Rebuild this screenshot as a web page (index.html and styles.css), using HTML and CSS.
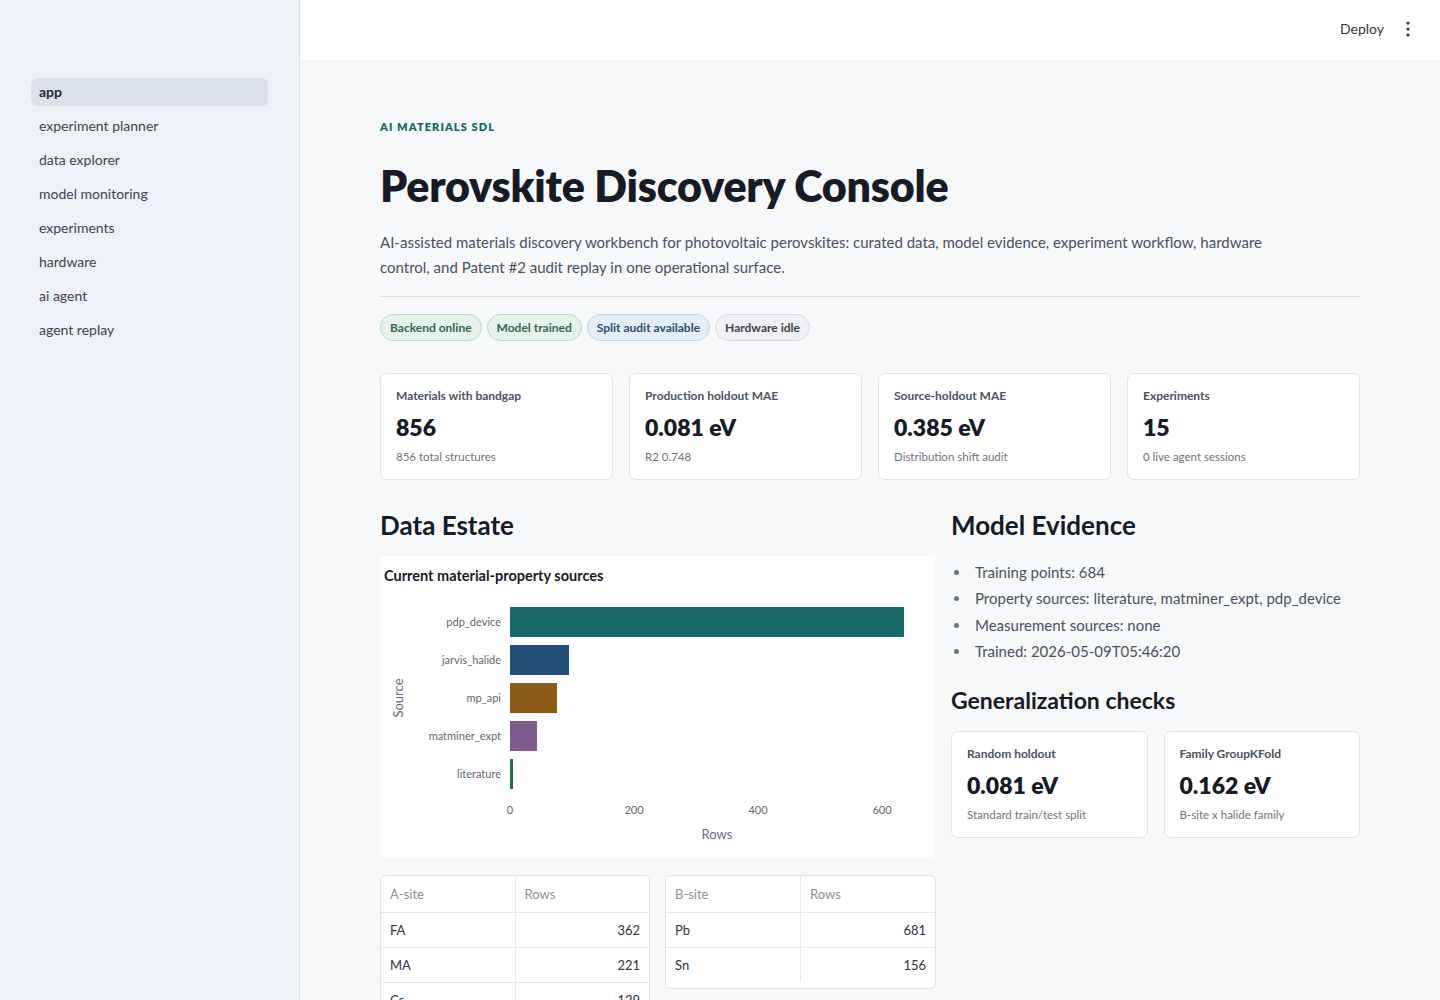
FILE: index.html
```html
<!DOCTYPE html>
<html lang="en">
<head>
<meta charset="utf-8">
<title>Perovskite Discovery Console</title>
<link rel="stylesheet" href="styles.css">
</head>
<body>
<div class="app">
  <aside class="sidebar">
    <nav class="nav">
      <a class="nav-item active">app</a>
      <a class="nav-item">experiment planner</a>
      <a class="nav-item">data explorer</a>
      <a class="nav-item">model monitoring</a>
      <a class="nav-item">experiments</a>
      <a class="nav-item">hardware</a>
      <a class="nav-item">ai agent</a>
      <a class="nav-item">agent replay</a>
    </nav>
  </aside>
  <div class="main">
    <header class="topbar">
      <span class="deploy">Deploy</span>
      <svg class="kebab" width="4" height="16" viewBox="0 0 4 16"><circle cx="2" cy="2" r="1.6" fill="#31333f"/><circle cx="2" cy="8" r="1.6" fill="#31333f"/><circle cx="2" cy="14" r="1.6" fill="#31333f"/></svg>
    </header>
    <main class="content">
      <div class="eyebrow">AI MATERIALS SDL</div>
      <h1 class="title">Perovskite Discovery Console</h1>
      <p class="lede">AI-assisted materials discovery workbench for photovoltaic perovskites: curated data, model evidence, experiment workflow, hardware control, and Patent #2 audit replay in one operational surface.</p>
      <hr class="divider">
      <div class="pills">
        <span class="pill green">Backend online</span>
        <span class="pill green">Model trained</span>
        <span class="pill blue">Split audit available</span>
        <span class="pill gray">Hardware idle</span>
      </div>
      <div class="metrics">
        <div class="card">
          <div class="card-label">Materials with bandgap</div>
          <div class="card-value">856</div>
          <div class="card-note">856 total structures</div>
        </div>
        <div class="card">
          <div class="card-label">Production holdout MAE</div>
          <div class="card-value">0.081 eV</div>
          <div class="card-note">R2 0.748</div>
        </div>
        <div class="card">
          <div class="card-label">Source-holdout MAE</div>
          <div class="card-value">0.385 eV</div>
          <div class="card-note">Distribution shift audit</div>
        </div>
        <div class="card">
          <div class="card-label">Experiments</div>
          <div class="card-value">15</div>
          <div class="card-note">0 live agent sessions</div>
        </div>
      </div>
      <div class="columns">
        <section class="col-left">
          <h2 class="section-title">Data Estate</h2>
          <div class="chart">
            <div class="chart-title">Current material-property sources</div>
            <svg class="chart-svg" width="555" height="270" viewBox="0 0 555 270">
              <g class="ylabels" text-anchor="end">
                <text x="121" y="39">pdp_device</text>
                <text x="121" y="77">jarvis_halide</text>
                <text x="121" y="115">mp_api</text>
                <text x="121" y="153">matminer_expt</text>
                <text x="121" y="191">literature</text>
              </g>
              <rect x="130" y="20" width="394" height="30" fill="#17696a"/>
              <rect x="130" y="58" width="59" height="30" fill="#244f78"/>
              <rect x="130" y="96" width="47" height="30" fill="#8a5a17"/>
              <rect x="130" y="134" width="27" height="30" fill="#7b5c8d"/>
              <rect x="130" y="172" width="3" height="30" fill="#2b6b4c"/>
              <g class="xlabels" text-anchor="middle">
                <text x="130" y="227">0</text>
                <text x="254" y="227">200</text>
                <text x="378" y="227">400</text>
                <text x="502" y="227">600</text>
              </g>
              <text class="axis-title" x="337" y="252" text-anchor="middle">Rows</text>
              <text class="axis-title" x="0" y="0" text-anchor="middle" transform="translate(23 111) rotate(-90)">Source</text>
            </svg>
          </div>
          <div class="tables">
            <div class="table-wrap">
              <table class="dtable">
                <thead><tr><th>A-site</th><th>Rows</th></tr></thead>
                <tbody>
                  <tr><td>FA</td><td class="num">362</td></tr>
                  <tr><td>MA</td><td class="num">221</td></tr>
                  <tr><td>Cs</td><td class="num">129</td></tr>
                </tbody>
              </table>
            </div>
            <div class="table-wrap">
              <table class="dtable">
                <thead><tr><th>B-site</th><th>Rows</th></tr></thead>
                <tbody>
                  <tr><td>Pb</td><td class="num">681</td></tr>
                  <tr><td>Sn</td><td class="num">156</td></tr>
                </tbody>
              </table>
            </div>
          </div>
        </section>
        <section class="col-right">
          <h2 class="section-title">Model Evidence</h2>
          <ul class="evidence">
            <li>Training points: 684</li>
            <li>Property sources: literature, matminer_expt, pdp_device</li>
            <li>Measurement sources: none</li>
            <li>Trained: 2026-05-09T05:46:20</li>
          </ul>
          <h3 class="sub-title">Generalization checks</h3>
          <div class="checks">
            <div class="card">
              <div class="card-label">Random holdout</div>
              <div class="card-value">0.081 eV</div>
              <div class="card-note">Standard train/test split</div>
            </div>
            <div class="card">
              <div class="card-label">Family GroupKFold</div>
              <div class="card-value">0.162 eV</div>
              <div class="card-note">B-site x halide family</div>
            </div>
          </div>
        </section>
      </div>
    </main>
  </div>
</div>
</body>
</html>
```
FILE: styles.css
```css
* { box-sizing: border-box; }
html, body { margin: 0; padding: 0; }
body {
  font-family: "Lato", "Noto Sans", "Liberation Sans", sans-serif;
  color: #31333f;
  background: #f6f8fa;
}
.app {
  display: flex;
  min-height: 100vh;
}
.sidebar {
  width: 300px;
  flex: 0 0 300px;
  background: #eef2f6;
  border-right: 1px solid #dde2e8;
  min-height: 100vh;
  padding: 78px 31px 0 31px;
}
.nav { display: flex; flex-direction: column; gap: 6px; }
.nav-item {
  display: block;
  height: 28px;
  line-height: 27px;
  padding: 0 8px;
  border-radius: 6px;
  font-size: 14px;
  color: #3d4350;
}
.nav-item.active {
  background: #dbe1e9;
  font-weight: 700;
  color: #262a33;
}
.main { flex: 1; display: flex; flex-direction: column; min-width: 0; }
.topbar {
  height: 60px;
  background: #ffffff;
  display: flex;
  align-items: center;
  justify-content: flex-end;
  padding-right: 30px;
  padding-bottom: 3px;
  gap: 22px;
}
.deploy { font-size: 14px; color: #31333f; }
.kebab { display: block; }
.content {
  padding: 60px 80px 40px 80px;
}
.eyebrow {
  font-size: 11px;
  font-weight: 800;
  letter-spacing: 1.1px;
  color: #0f6b66;
  line-height: 14px;
}
.title {
  margin: 26px 0 0 0;
  font-size: 43px;
  line-height: 52px;
  font-weight: 800;
  color: #161b26;
  letter-spacing: -0.2px;
}
.lede {
  margin: 18px 0 0 0;
  max-width: 900px;
  font-size: 15px;
  line-height: 25px;
  color: #4a5160;
}
.divider {
  margin: 16px 0 0 0;
  border: 0;
  border-top: 1px solid #d9dee5;
}
.pills { display: flex; gap: 5px; margin-top: 17px; }
.pill {
  display: inline-block;
  height: 27px;
  line-height: 25px;
  padding: 0 9px;
  border-radius: 14px;
  font-size: 12px;
  font-weight: 700;
  border: 1px solid;
}
.pill.green { background: #e6f2ea; border-color: #bcd9c6; color: #2b6b4a; }
.pill.blue { background: #e5edf7; border-color: #c3d3e7; color: #234e78; }
.pill.gray { background: #eef0f3; border-color: #d3d8df; color: #3b4250; }
.metrics {
  display: grid;
  grid-template-columns: repeat(4, 1fr);
  gap: 16px;
  margin-top: 32px;
}
.card {
  background: #ffffff;
  border: 1px solid #dfe3e8;
  border-radius: 7px;
  padding: 14px 15px 14px 15px;
  height: 107px;
}
.card-label { font-size: 12px; font-weight: 700; color: #4b5260; line-height: 16px; }
.card-value { font-size: 23px; font-weight: 800; color: #161b26; line-height: 30px; margin-top: 8px; }
.card-note { font-size: 11.5px; color: #6c7381; line-height: 16px; margin-top: 7px; }
.columns {
  display: grid;
  grid-template-columns: 555px 1fr;
  gap: 16px;
  margin-top: 30px;
}
.section-title {
  margin: 0;
  font-size: 26px;
  line-height: 30px;
  font-weight: 700;
  color: #161b26;
}
.chart {
  margin-top: 17px;
  background: #ffffff;
  height: 300px;
}
.chart-title {
  font-size: 14.5px;
  font-weight: 700;
  color: #161b26;
  padding: 10px 0 0 4px;
  line-height: 18px;
}
.chart-svg { display: block; margin-top: 2px; }
.chart-svg text { font-family: "Lato", "Noto Sans", sans-serif; fill: #5f6573; font-size: 11px; }
.chart-svg .axis-title { font-size: 13px; fill: #666c79; }
.tables {
  display: grid;
  grid-template-columns: 270px 271px;
  gap: 15px;
  margin-top: 18px;
}
.table-wrap {
  background: #ffffff;
  border: 1px solid #dfe3e8;
  border-radius: 6px;
  overflow: hidden;
  align-self: start;
  padding: 0 0 6px 0;
}
.dtable { width: 100%; border-collapse: collapse; font-size: 13px; }
.dtable th, .dtable td {
  height: 35px;
  padding: 0 9px;
  border-bottom: 1px solid #e6e9ee;
  text-align: left;
  width: 50%;
}
.dtable th + th, .dtable td + td { border-left: 1px solid #e6e9ee; }
.dtable th { font-weight: 400; color: #8a8f9b; height: 36px; }
.dtable td { color: #31333f; }
.dtable td.num { text-align: right; }
.dtable tbody tr:last-child td { border-bottom: 0; }
.evidence {
  margin: 19px 0 0 0;
  padding: 0 0 0 20px;
  font-size: 15px;
  line-height: 26.4px;
  color: #4a5160;
}
.evidence li { padding-left: 4px; }
.evidence li::marker { color: #6c7381; }
.sub-title {
  margin: 20px 0 0 0;
  font-size: 23px;
  line-height: 30px;
  font-weight: 700;
  color: #161b26;
}
.checks {
  display: grid;
  grid-template-columns: 1fr 1fr;
  gap: 16px;
  margin-top: 16px;
}
```
